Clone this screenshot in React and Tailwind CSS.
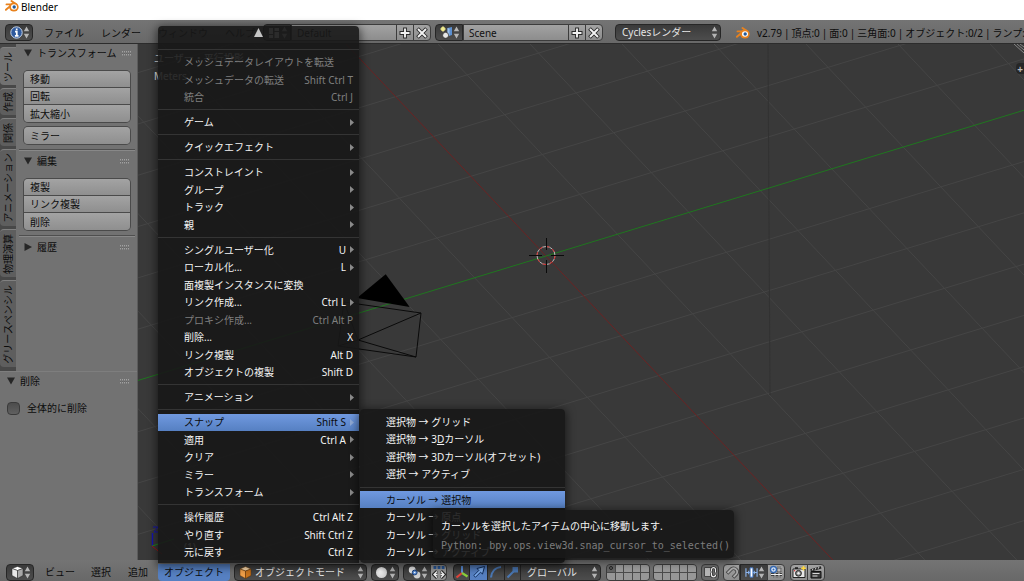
import { useState } from 'react'

const MENU_GROUPS = [
  [
    { label: 'メッシュデータレイアウトを転送', disabled: true },
    { label: 'メッシュデータの転送', keys: 'Shift Ctrl T', disabled: true },
    { label: '統合', keys: 'Ctrl J', disabled: true },
  ],
  [{ label: 'ゲーム', sub: true }],
  [{ label: 'クイックエフェクト', sub: true }],
  [
    { label: 'コンストレイント', sub: true },
    { label: 'グループ', sub: true },
    { label: 'トラック', sub: true },
    { label: '親', sub: true },
  ],
  [
    { label: 'シングルユーザー化', keys: 'U', sub: true },
    { label: 'ローカル化...', keys: 'L', sub: true },
    { label: '面複製インスタンスに変換' },
    { label: 'リンク作成...', keys: 'Ctrl L', sub: true },
    { label: 'プロキシ作成...', keys: 'Ctrl Alt P', disabled: true },
    { label: '削除...', keys: 'X' },
    { label: 'リンク複製', keys: 'Alt D' },
    { label: 'オブジェクトの複製', keys: 'Shift D' },
  ],
  [{ label: 'アニメーション', sub: true }],
  [
    { label: 'スナップ', keys: 'Shift S', sub: true, active: true },
    { label: '適用', keys: 'Ctrl A', sub: true },
    { label: 'クリア', sub: true },
    { label: 'ミラー', sub: true },
    { label: 'トランスフォーム', sub: true },
  ],
  [
    { label: '操作履歴', keys: 'Ctrl Alt Z' },
    { label: 'やり直す', keys: 'Shift Ctrl Z' },
    { label: '元に戻す', keys: 'Ctrl Z' },
  ],
]

const SNAP_GROUPS = [
  [
    { label: '選択物 → グリッド' },
    { label: <>選択物 → 3<u>D</u>カーソル</> },
    { label: '選択物 → 3Dカーソル(オフセット)' },
    { label: '選択 → アクティブ' },
  ],
  [
    { label: 'カーソル → 選択物', active: true },
    { label: 'カーソル → 原点' },
    { label: 'カーソル → グリッド' },
    { label: 'カーソル → アクティブ' },
  ],
]

const TABS = [
  { label: 'ツール', size: 'h-[38px]', active: true },
  { label: '作成', size: 'h-[27px]' },
  { label: '関係', size: 'h-[28px]' },
  { label: 'アニメーション', size: 'h-[77px]' },
  { label: '物理演算', size: 'h-[48px]' },
  { label: 'グリースペンシル', size: 'h-[87px]' },
]

const STATS = ['v2.79', '頂点:0', '面:0', '三角面:0', 'オブジェクト:0/2', 'ランプ:']

const dark = 'border border-[#262626] bg-linear-to-b from-[#3a3a3a] to-[#4d4d4d] text-[#e6e6e6]'
const light = 'border border-[#3c3c3c] bg-linear-to-b from-[#a2a2a2] to-[#8d8d8d] text-[#111]'

function BlenderLogo({ className }) {
  return (
    <svg className={className} viewBox="0 0 14 12" fill="none" aria-hidden="true">
      <path d="M6.500 1 11.500 4.600M1.500 4.400H8M.9 9.800 6 5.600" stroke="#e8821e" strokeWidth="1.900" strokeLinecap="round" />
      <ellipse cx="8.900" cy="7.100" rx="4.800" ry="4.500" fill="#e8821e" />
      <ellipse cx="9" cy="7" rx="3" ry="2.700" fill="#fff" />
      <circle cx="9.200" cy="7" r="1.700" fill="#235a9c" />
    </svg>
  )
}

function Steps() {
  return (
    <svg className="w-[7px] h-[13px] shrink-0" viewBox="0 0 7 13" fill="#b4b4b4" aria-hidden="true">
      <path d="M3.5.5 6.2 5.3H.8zM3.5 12.5.8 7.7h5.4z" />
    </svg>
  )
}

function Grip() {
  return (
    <svg className="w-[10px] h-[5px] ml-auto shrink-0" viewBox="0 0 10 5" aria-hidden="true">
      <path d="M0 1h10M0 4h10" stroke="#d0d0d0" strokeWidth="1" strokeDasharray="1 1" />
      <path d="M0 2h10M0 5h10" stroke="#4a4a4a" strokeWidth=".6" strokeDasharray="1 1" />
    </svg>
  )
}

function PlusIcon() {
  return (
    <svg className="w-[12px] h-[12px]" viewBox="0 0 12 12" aria-hidden="true">
      <path d="M6 .5v11M.5 6h11" stroke="#2a2a2a" strokeWidth="3.800" />
      <path d="M6 1.500v9M1.500 6h9" stroke="#f2f2f2" strokeWidth="1.900" />
    </svg>
  )
}

function CrossIcon() {
  return (
    <svg className="w-[12px] h-[12px]" viewBox="0 0 12 12" aria-hidden="true">
      <path d="m1.500 1.500 9 9M10.500 1.500l-9 9" stroke="#2a2a2a" strokeWidth="3.800" />
      <path d="m2 2 8 8M10 2l-8 8" stroke="#f2f2f2" strokeWidth="1.900" />
    </svg>
  )
}

function IconMenu({ label, className = 'w-[28px] rounded-sm', children }) {
  return (
    <button type="button" aria-label={label} aria-haspopup="menu" className={`h-[17px] shrink-0 flex items-center justify-between pl-[4px] pr-[2px] ${dark} ${className}`}>
      {children}
      <Steps />
    </button>
  )
}

function DataBlock({ label, value, width, children }) {
  return (
    <div className="flex shrink-0">
      <IconMenu label={`${label}一覧`} className="w-[28px] rounded-l-sm">{children}</IconMenu>
      <input aria-label={label} defaultValue={value} className={`h-[17px] ${width} px-[5px] ${light}`} />
      <button type="button" aria-label={`${label}を追加`} className={`w-[18px] h-[17px] -ml-px flex items-center justify-center ${light}`}><PlusIcon /></button>
      <button type="button" aria-label={`${label}を削除`} className={`w-[18px] h-[17px] -ml-px flex items-center justify-center rounded-r-sm ${light}`}><CrossIcon /></button>
    </div>
  )
}

function Dropdown({ label, value, className, children }) {
  return (
    <div className={`h-[17px] shrink-0 flex items-center pr-[2px] ${dark} ${className}`}>
      {children}
      <select aria-label={label} defaultValue={value} className="appearance-none flex-1 min-w-0 h-[15px] leading-[15px] outline-none">
        <option>{value}</option>
      </select>
      <Steps />
    </div>
  )
}

function TopBar() {
  return (
    <header className="h-[24px] shrink-0 flex items-center pt-[2px] pl-[5px] bg-linear-to-b from-[#747474] to-[#686868] border-b border-[#2c2c2c] overflow-hidden whitespace-nowrap text-[#0c0c0c]">
      <IconMenu label="エディタータイプ">
        <svg className="w-[13px] h-[13px]" viewBox="0 0 13 13" aria-hidden="true">
          <circle cx="6.5" cy="6.5" r="5.7" fill="#2f5a9e" stroke="#c9d6ea" strokeWidth="1" />
          <path d="M6.7 2.4v1.9M5 5.6h1.8v4.2M4.9 9.8h3.6" stroke="#fff" strokeWidth="1.7" fill="none" />
        </svg>
      </IconMenu>
      <nav className="flex shrink-0 pl-[11px] gap-[17px]">
        <button type="button">ファイル</button>
        <button type="button">レンダー</button>
        <button type="button">ウィンドウ</button>
        <button type="button">ヘルプ</button>
      </nav>
      <div className="flex shrink-0 pl-[8px] gap-[4px]">
        <DataBlock label="画面レイアウト" value="Default" width="w-[106px]">
          <svg className="w-[12px] h-[12px]" viewBox="0 0 12 12" fill="#ddd" aria-hidden="true">
            <path d="M1 1h4v6H1zM1 8h4v3H1zM6.500 1H11v3H6.500zM6.500 5H11v6H6.500z" />
          </svg>
        </DataBlock>
        <DataBlock label="シーン" value="Scene" width="w-[106px]">
          <svg className="w-[13px] h-[13px]" viewBox="0 0 13 13" aria-hidden="true">
            <circle cx="3" cy="3" r="2.200" fill="#e6e07a" />
            <path d="M3 0v6M0 3h6" stroke="#f5f1a8" strokeWidth=".7" />
            <path d="M7.500 2 12 1v8l-3 1-1.500-2z" fill="#5b8fd0" />
            <path d="m7.500 2 2 .8v7L7.500 8z" fill="#9dc0ec" />
            <circle cx="5.600" cy="9.300" r="3" fill="#e8e8e8" stroke="#222" strokeWidth=".7" />
          </svg>
        </DataBlock>
      </div>
      <Dropdown label="レンダーエンジン" value="Cyclesレンダー" className="w-[106px] ml-[12px] pl-[6px] rounded-sm" />
      <BlenderLogo className="w-[14px] h-[12px] shrink-0 ml-[15px] mr-[7px]" />
      <p className="flex gap-[2px]">
        {STATS.map((s, i) => (
          <span key={s} className="flex gap-[2px]">
            {i > 0 && <span>|</span>}
            <span>{s}</span>
          </span>
        ))}
      </p>
    </header>
  )
}

function PanelTitle({ label, open }) {
  return (
    <button type="button" aria-expanded={open} className="w-full flex items-center gap-[5px] h-[16px] whitespace-nowrap">
      <svg className="w-[8px] h-[8px] shrink-0" viewBox="0 0 8 8" fill="#262626" aria-hidden="true">
        <path d={open ? 'M0 .5h8L4 7.500z' : 'M.5 0v8L8 4z'} />
      </svg>
      <span>{label}</span>
      <Grip />
    </button>
  )
}

function ButtonStack({ items }) {
  return (
    <div className="flex flex-col rounded-sm ring-1 ring-[#4a4a4a] divide-y divide-[#4a4a4a] overflow-hidden">
      {items.map((t) => (
        <button key={t} type="button" className="h-[17px] leading-[16px] pl-[6px] text-left bg-linear-to-b from-[#a3a3a3] to-[#8f8f8f]">
          {t}
        </button>
      ))}
    </div>
  )
}

function ToolShelf() {
  const [all, setAll] = useState(false)

  return (
    <aside className="w-[138px] shrink-0 flex flex-col bg-[#727272] text-[#0c0c0c] border-r border-[#5c5c5c]">
      <div className="flex">
        <div className="w-[16px] shrink-0 flex flex-col gap-[3px] pt-[3px] pb-[4px] bg-[#484848]">
          {TABS.map((t) => (
            <button
              key={t.label}
              type="button"
              className={`flex items-center justify-center rounded-l-sm border-t border-[#808080] ${t.size} ${t.active ? 'bg-[#727272]' : 'bg-[#5e5e5e]'}`}
            >
              <span className="[writing-mode:vertical-rl] [text-orientation:sideways] rotate-180 leading-[14px] whitespace-nowrap">{t.label}</span>
            </button>
          ))}
        </div>
        <div className="flex-1 min-w-0 pl-[3px] pr-[2px]">
          <section className="h-[106px] pt-px pl-[5px] pr-[5px] border-b border-[#4f4f4f]">
            <PanelTitle label="トランスフォーム" open />
            <div className="flex flex-col gap-[5px] pt-[10px]">
              <ButtonStack items={['移動', '回転', '拡大縮小']} />
              <ButtonStack items={['ミラー']} />
            </div>
          </section>
          <section className="h-[86px] pt-[2px] pl-[5px] pr-[5px] border-t border-t-[#888] border-b border-b-[#4f4f4f]">
            <PanelTitle label="編集" open />
            <div className="pt-[10px]">
              <ButtonStack items={['複製', 'リンク複製', '削除']} />
            </div>
          </section>
          <section className="pt-[2px] pl-[5px] pr-[5px] border-t border-[#888]">
            <PanelTitle label="履歴" />
          </section>
        </div>
      </div>
      <section className="flex-1 pt-px pl-[7px] pr-[7px] border-t border-[#7e7e7e]">
        <PanelTitle label="削除" open />
        <label className="flex items-center gap-[7px] pt-[12px]">
          <input
            type="checkbox"
            checked={all}
            onChange={() => setAll(!all)}
            className="appearance-none w-[13px] h-[13px] rounded-sm border border-[#3a3a3a] bg-linear-to-b from-[#4c4c4c] to-[#606060] checked:bg-[#5680c2]"
          />
          全体的に削除
        </label>
      </section>
    </aside>
  )
}

function Viewport() {
  // grid steps along each floor axis, counted from the world origin
  const steps = Array.from({ length: 25 }, (_, i) => i - 12).filter((i) => i !== 0)

  return (
    <main className="relative flex-1 overflow-hidden bg-[#393939]">
      <svg className="absolute inset-0 w-full h-full" fill="none" aria-hidden="true">
        <g transform="translate(-138 -44)">
          <g stroke="#454545">
            {steps.map((i) => (
              <path key={`x${i}`} d={`M-54 ${439 + i * 51.3}L1146 ${73 + i * 51.3}`} />
            ))}
            {steps.map((i) => (
              <path key={`y${i}`} d={`M${46 + i * 92} -274L${1046 + i * 92} 786`} />
            ))}
          </g>
          <path d="M768 44 770 395" stroke="#323232" />
          <path d="M46 -274 1046 786" stroke="#6b2323" />
          <path d="M-54 439 1146 73" stroke="#1f761f" />
          <g stroke="#0a0a0a">
            <path d="M344 302 421 313 416 357 338 346zM358 340 421 313M358 340l58 17M358 340l-14-38M358 340l-20 6" />
            <path d="M357 298 385.700 274.300 409.700 307z" fill="#000" stroke="none" />
          </g>
          <circle cx="546" cy="255.500" r="9" stroke="#bbb" />
          <circle cx="546" cy="255.500" r="9" stroke="#d42020" strokeDasharray="3.500 3.500" />
          <path d="M529 255.500h13M551 255.500h13M546.500 238v12M546.500 260v13" stroke="#0a0a0a" />
          <path d="M152.500 533v13" stroke="#1414b4" strokeWidth="1.400" />
          <path d="m152 546 22-7" stroke="#1d8a1d" />
          <path d="m152 546 10 8" stroke="#a01818" />
          <path d="M153 527h5l-4 5h4" stroke="#1414b4" />
          <path d="M1014 44l10 9M1017 44l7 6M1020 44l4 3" stroke="#858585" />
        </g>
      </svg>
      <div className="relative flex justify-between pt-[5px] pl-[16px] text-[#eee]">
        <div className="leading-[18px]">
          <p>ユーザー・平行投影</p>
          <p>Meters</p>
        </div>
        <button type="button" aria-label="プロパティを開く" className="w-[8px] h-[11px] mt-[14px] flex items-center justify-center rounded-l-sm bg-[#262626] text-[#bbb] font-bold leading-[10px]">+</button>
      </div>
      <p className="absolute bottom-[6px] left-[46px] text-[#eee]">(1)</p>
    </main>
  )
}

function LayerGrid({ label, filled }) {
  return (
    <div role="group" aria-label={label} className="w-[44px] h-[17px] shrink-0 grid grid-cols-5 grid-rows-2 gap-px rounded-sm border border-[#3c3c3c] bg-[#4a4a4a] overflow-hidden">
      {Array.from({ length: 10 }, (_, i) => (
        <button key={i} type="button" aria-label={`${label} ${i + 1}`} className={`flex items-center justify-center ${filled && i === 0 ? 'bg-[#636363]' : 'bg-[#979797]'}`}>
          {filled && i === 0 && <span className="w-[4px] h-[4px] rounded-full border border-[#222]" />}
        </button>
      ))}
    </div>
  )
}

function ToolButton({ label, className, children }) {
  return (
    <button type="button" aria-label={label} className={`h-[17px] shrink-0 flex items-center justify-center ${className}`}>
      <svg className="w-[14px] h-[14px] shrink-0" viewBox="0 0 14 14" fill="none" aria-hidden="true">{children}</svg>
    </button>
  )
}

function BottomBar() {
  return (
    <footer className="h-[21px] shrink-0 flex items-center pt-[3px] pl-[6px] bg-linear-to-b from-[#747474] to-[#686868] overflow-hidden whitespace-nowrap text-[#0c0c0c]">
      <IconMenu label="エディタータイプ">
        <svg className="w-[13px] h-[13px]" viewBox="0 0 13 13" stroke="#222" strokeWidth=".5" aria-hidden="true">
          <path d="m1 2.500 5.500-2 5.500 2-5.500 2z" fill="#fff" />
          <path d="M1 2.500v7l5.500 3v-8z" fill="#e8e8e8" />
          <path d="M12 2.500v7l-5.500 3v-8z" fill="#a8a8a8" />
        </svg>
      </IconMenu>
      <nav className="flex shrink-0 items-center pl-[11px]">
        <button type="button" className="w-[46px] text-left">ビュー</button>
        <button type="button" className="w-[37px] text-left">選択</button>
        <button type="button" className="w-[30px] text-left">追加</button>
        <button type="button" className="w-[72px] h-[17px] rounded-b-sm bg-[#5680c2]">オブジェクト</button>
      </nav>
      <Dropdown label="モード" value="オブジェクトモード" className="w-[133px] ml-[4px] pl-[4px] gap-[3px] rounded-sm">
        <svg className="w-[13px] h-[13px] shrink-0" viewBox="0 0 13 13" stroke="#5a3208" strokeWidth=".5" aria-hidden="true">
          <path d="m1 3 5.500-2.500L12 3 6.500 5z" fill="#fbd9ac" />
          <path d="M1 3v6.500l5.500 3V5z" fill="#f0a04a" />
          <path d="M12 3v6.500l-5.500 3V5z" fill="#c8731c" />
        </svg>
      </Dropdown>
      <div className="flex shrink-0 pl-[4px]">
        <IconMenu label="シェーディング">
          <span className="w-[11px] h-[11px] shrink-0 rounded-full bg-radial-[at_40%_35%] from-white to-[#bdbdbd]" />
        </IconMenu>
      </div>
      <div className="flex shrink-0 pl-[4px]">
        <IconMenu label="ピボット" className="w-[28px] rounded-l-sm">
          <svg className="w-[13px] h-[13px]" viewBox="0 0 13 13" aria-hidden="true">
            <circle cx="4.200" cy="4" r="3.400" fill="#ececec" />
            <circle cx="9" cy="9" r="3.400" fill="#d0d0d0" />
            <circle cx="6.700" cy="6.500" r="2.400" fill="#5b8fd8" stroke="#1d3f78" />
            <circle cx="6.700" cy="6.500" r=".8" fill="#fff" />
          </svg>
        </IconMenu>
        <ToolButton label="中心点を操作" className={`w-[17px] -ml-px rounded-r-sm ${light}`}>
          <path d="M1.500 2.500h11" stroke="#2c5da0" strokeWidth="3" strokeDasharray="2.800 1.300" />
          <path d="M1.500 9.500h4M8.500 9.500h4M5 6 1.500 9.500 5 13M9 6l3.500 3.500L9 13" stroke="#222" strokeWidth="2.800" />
          <path d="M2 9.500h3.500M8.500 9.500H12M5 6.500l-3 3 3 3M9 6.500l3 3-3 3" stroke="#f2f2f2" strokeWidth="1.300" />
        </ToolButton>
      </div>
      <div className="flex shrink-0 pl-[6px]">
        <ToolButton label="マニピュレーター" className={`w-[17px] rounded-l-sm ${dark}`}>
          <path d="M7 8V1" stroke="#5e93e0" strokeWidth="2" />
          <path d="m7 8-5.500 4.500" stroke="#e0443a" strokeWidth="2.200" />
          <path d="m7 8 5.500 3.500" stroke="#8bd03c" strokeWidth="2.200" />
        </ToolButton>
        <ToolButton label="移動" className="w-[17px] border-y border-[#262626] bg-[#5680c2]">
          <path d="m1.800 10.500 5-5L5 3.500l7.500-2-2 7.500-2-1.800-5 5z" fill="#7fb0f2" stroke="#0f2c5c" />
        </ToolButton>
        <ToolButton label="回転" className={`w-[18px] ${dark}`}>
          <path d="M2 12.500C2.500 7 6 2.500 12 2" stroke="#4b78b4" strokeWidth="2.200" />
        </ToolButton>
        <ToolButton label="拡大縮小" className={`w-[17px] -ml-px ${dark}`}>
          <path d="m1.500 12.500 6-6" stroke="#4b78b4" strokeWidth="2" />
          <path d="M6.500 2H12v5.500H6.500z" fill="#4b78b4" />
        </ToolButton>
        <Dropdown label="座標系" value="グローバル" className="w-[81px] pl-[6px] rounded-r-sm -ml-px" />
      </div>
      <div className="flex shrink-0 pl-[5px] gap-[3px]">
        <LayerGrid label="レイヤー上" filled />
        <LayerGrid label="レイヤー下" />
      </div>
      <ToolButton label="シーンにロック" className="w-[18px] ml-[4px] rounded-sm border border-[#3c3c3c] bg-[#6a6a6a]">
        <path d="M1.500 2.500H9v9H1.500z" fill="#b4b4b4" stroke="#444" />
        <path d="M8.500 6.500V4.700a2 2 0 0 1 4 0v2.800M8.500 7.500v2.300a2 2 0 0 0 4 0" stroke="#222" strokeWidth="2.600" />
        <path d="M8.500 6.500V4.700a2 2 0 0 1 4 0v2.800M8.500 7.500v2.300a2 2 0 0 0 4 0" stroke="#eee" strokeWidth="1.200" />
      </ToolButton>
      <div className="flex shrink-0 pl-[4px]">
        <ToolButton label="スナップ" className={`w-[17px] rounded-l-sm ${light}`}>
          <path d="M2 8.500 6.500 4a3.600 3.600 0 0 1 5 5L8 12.500" stroke="#444" strokeWidth="3.600" />
          <path d="M2.500 8 6.500 4a3.600 3.600 0 0 1 5 5L8.500 12" stroke="#a8a8a8" strokeWidth="1.800" />
        </ToolButton>
        <IconMenu label="スナップ要素" className="w-[28px]">
          <svg className="w-[14px] h-[13px]" viewBox="0 0 14 13" aria-hidden="true">
            <path d="M1 2v9M13 2v9M1 6.500h12M4 4.500v4M10 4.500v4" stroke="#8eb6ee" strokeWidth="1.200" />
            <path d="M5.500 1.500h3v10h-3z" fill="#fff" stroke="#3f78cc" />
          </svg>
        </IconMenu>
        <ToolButton label="スナップ対象" className={`w-[18px] rounded-r-sm -ml-px ${light}`}>
          <path d="M10 1v12M13 5H8M13 9.500H2M6 8v5" stroke="#222" strokeWidth="2.400" />
          <path d="M10 1v12M13 5H8M13 9.500H2M6 8v5" stroke="#eee" strokeWidth="1" />
          <circle cx="4.500" cy="4.500" r="3" fill="#dce9fb" stroke="#3467b0" strokeWidth="1.400" />
          <circle cx="4.500" cy="4.500" r="1" fill="#3467b0" />
        </ToolButton>
      </div>
      <div className="flex shrink-0 pl-[5px]">
        <ToolButton label="画像をレンダー" className={`w-[18px] rounded-l-sm ${light}`}>
          <path d="M1 4h12v8.500H1z" fill="#e6e6e6" stroke="#222" />
          <path d="M3 2.200h3V4H3z" fill="#222" />
          <circle cx="6.500" cy="8.300" r="2.900" fill="#888" stroke="#222" />
          <circle cx="6.500" cy="8.300" r="1.200" fill="#eee" />
          <circle cx="2.600" cy="5.800" r=".8" fill="#c33" />
          <path d="M11.500 1v4.600M9.200 3.300h4.600" stroke="#ffd83a" strokeWidth="1.500" />
        </ToolButton>
        <ToolButton label="動画をレンダー" className={`w-[18px] -ml-px rounded-r-sm ${light}`}>
          <path d="M2 6.500h10V13H2z" fill="#3a3a3a" stroke="#111" />
          <path d="m1.300 4.300 10.500-3 .7 2.200-10.500 3z" fill="#222" />
          <path d="m3.200 5.500.8-1.700M6.200 4.600l.8-1.700M9.200 3.700l.8-1.700M3.500 8.500h7M3.500 11h5" stroke="#d8d8d8" />
        </ToolButton>
      </div>
    </footer>
  )
}

function MenuItem({ item }) {
  const color = item.active ? 'bg-linear-to-b from-[#7099e0] to-[#5680c2] text-[#0a0a0a]'
    : item.disabled ? 'text-[#7f7f7f]' : 'text-[#f4f4f4]'

  return (
    <button type="button" role="menuitem" disabled={item.disabled} className={`grow-7 basis-0 min-h-0 flex items-center pl-[26px] whitespace-nowrap leading-none ${color} ${item.sub ? 'pr-[5px]' : 'pr-[6px]'}`}>
      <span>{item.label}</span>
      {item.keys && <span className="ml-auto">{item.keys}</span>}
      {item.sub && (
        <svg className={`w-[4px] h-[7px] ${item.keys ? 'ml-[4px]' : 'ml-auto'}`} viewBox="0 0 4 7" fill={item.active ? '#8fa9d4' : '#8a8a8a'} aria-hidden="true">
          <path d="M0 0v7l4-3.500z" />
        </svg>
      )}
    </button>
  )
}

function Separator() {
  return (
    <div role="separator" className="grow-3 basis-0 min-h-0 flex flex-col justify-center">
      <div className="border-t border-[#343434]" />
    </div>
  )
}

function MenuGroups({ groups }) {
  return groups.map((group, i) => (
    <div key={i} className="contents">
      {i > 0 && <Separator />}
      {group.map((item, j) => <MenuItem key={j} item={item} />)}
    </div>
  ))
}

export default function App() {
  return (
    <div lang="ja" className="relative min-h-screen flex flex-col overflow-hidden bg-[#393939] text-[10px] leading-[14px] font-['Noto_Sans','Noto_Sans_CJK_JP',sans-serif]">
      <div className="h-[20px] shrink-0 flex items-start gap-[2px] pl-[5px] bg-white text-black">
        <BlenderLogo className="w-[14px] h-[12px]" />
        <h1>Blender</h1>
      </div>
      <TopBar />
      <div className="flex-1 flex">
        <ToolShelf />
        <Viewport />
      </div>
      <BottomBar />

      {/* オブジェクトメニュー */}
      <div role="menu" aria-label="オブジェクト" className="absolute left-[158px] bottom-[18px] w-[201px] h-[537px] pb-[2px] flex flex-col rounded-t bg-[#171717]/90 shadow-[0_2px_8px_2px_rgba(0,0,0,0.5)]">
        <div className="h-[20px] shrink-0 flex justify-center pt-[2px]">
          <svg className="w-[9px] h-[9px]" viewBox="0 0 9 9" fill="#c4c4c4" aria-hidden="true"><path d="M4.500 0 9 9H0z" /></svg>
        </div>
        <Separator />
        <MenuGroups groups={MENU_GROUPS} />
      </div>

      <div role="menu" aria-label="スナップ" className="absolute left-[360px] bottom-[18px] w-[205px] h-[154px] pt-[4px] pb-[2px] flex flex-col rounded bg-[#171717]/90 shadow-[0_2px_8px_2px_rgba(0,0,0,0.5)]">
        <MenuGroups groups={SNAP_GROUPS} />
      </div>

      <div role="tooltip" className="absolute left-[433px] bottom-[23px] w-[301px] h-[48px] pt-[7px] pl-[8px] rounded bg-[#171717]/90 shadow-[0_2px_8px_2px_rgba(0,0,0,0.5)] leading-[19px] whitespace-nowrap">
        <p className="text-[#f4f4f4]">カーソルを選択したアイテムの中心に移動します.</p>
        <p className="text-[#7c7c7c] font-['DejaVu_Sans_Mono',monospace]">Python: bpy.ops.view3d.snap_cursor_to_selected()</p>
      </div>
    </div>
  )
}
